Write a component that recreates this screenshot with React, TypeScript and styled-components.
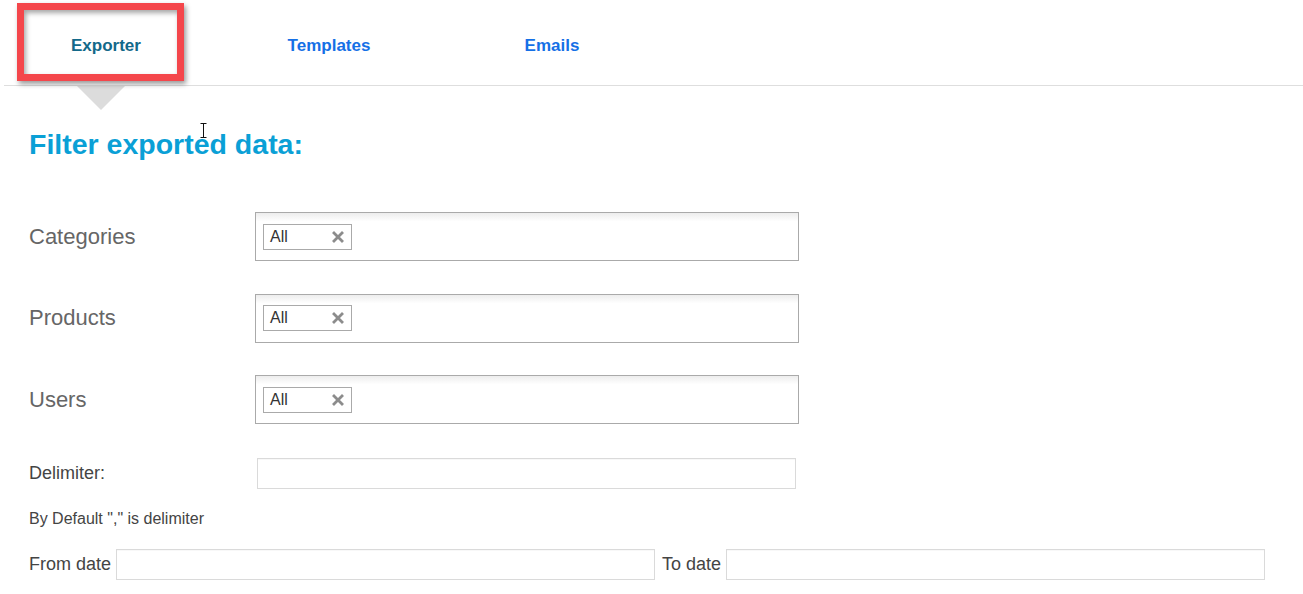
import React from "react"
import styled, { createGlobalStyle } from "styled-components"

const GlobalStyle = createGlobalStyle`
  html, body {
    margin: 0;
    background: #fff;
    font-family: "Liberation Sans", Arial, sans-serif;
  }
`

const tabs = ["Exporter", "Templates", "Emails"]
const filters = ["Categories", "Products", "Users"]

const Tag: React.FC<{ label: string }> = ({ label }) => (
  <TagBox>
    <TagText>{label}</TagText>
    <svg width="12" height="12" viewBox="0 0 12 12">
      <path d="M2 2 L10 10 M10 2 L2 10" stroke="#8c8c8c" strokeWidth="2.8" strokeLinecap="square" />
    </svg>
  </TagBox>
)

export default function App() {
  return (
    <Page>
      <GlobalStyle />
      <TabBar>
        {tabs.map((t, i) => (
          <Tab key={t} $active={i === 0}>
            {t}
          </Tab>
        ))}
        <Pointer />
        <Highlight />
      </TabBar>

      <Content>
        <Heading>
          Filter exported data:
          <Caret width="7" height="15" viewBox="0 0 7 15">
            <path d="M0.5 0.5 H6.5 M3.5 0.5 V14.5 M0.5 14.5 H6.5" stroke="#111" strokeWidth="1" fill="none" />
          </Caret>
        </Heading>

        <Filters>
          {filters.map((f) => (
            <FilterRow key={f}>
              <FilterLabel>{f}</FilterLabel>
              <Choices>
                <Tag label="All" />
              </Choices>
            </FilterRow>
          ))}
        </Filters>

        <DelimiterRow>
          <FieldLabel>Delimiter:</FieldLabel>
          <TextInput />
        </DelimiterRow>
        <Hint>By Default "," is delimiter</Hint>

        <DateRow>
          <FieldLabel>From date</FieldLabel>
          <TextInput />
          <FieldLabel $spaced>To date</FieldLabel>
          <TextInput />
        </DateRow>
      </Content>
    </Page>
  )
}

const Page = styled.div`
  width: 1303px;
  min-height: 594px;
  overflow: hidden;
`

const TabBar = styled.nav`
  position: relative;
  display: flex;
  gap: 19px;
  height: 85px;
  margin-left: 4px;
  border-bottom: 1px solid #dedede;
`

const Tab = styled.div<{ $active?: boolean }>`
  width: 204px;
  display: flex;
  align-items: center;
  justify-content: center;
  padding-top: 6px;
  font-size: 17px;
  font-weight: bold;
  color: ${(p) => (p.$active ? "#13698a" : "#1570e6")};
`

// little grey arrow hanging under the active tab
const Pointer = styled.div`
  position: absolute;
  left: 73px;
  top: 86px;
  width: 0;
  height: 0;
  border-left: 24px solid transparent;
  border-right: 24px solid transparent;
  border-top: 24px solid #dcdcdc;
`

const Highlight = styled.div`
  position: absolute;
  left: 13px;
  top: 3px;
  width: 153px;
  height: 64px;
  border: 7px solid #f4464b;
  box-shadow: 2px 3px 5px rgba(0, 0, 0, 0.4), inset 2px 3px 5px rgba(0, 0, 0, 0.35);
  pointer-events: none;
`

const Content = styled.main`
  padding: 42px 0 0 29px;
`

const Heading = styled.h1`
  position: relative;
  margin: 0;
  font-size: 28.5px;
  line-height: 32px;
  font-weight: bold;
  color: #0aa0d6;
`

const Caret = styled.svg`
  position: absolute;
  left: 171px;
  top: -5px;
`

const Filters = styled.div`
  display: flex;
  flex-direction: column;
  gap: 32.5px;
  margin-top: 52px;
`

const FilterRow = styled.div`
  display: grid;
  grid-template-columns: 226px 544px;
  align-items: center;
`

const FilterLabel = styled.label`
  font-size: 22px;
  color: #666;
`

const Choices = styled.div`
  box-sizing: border-box;
  height: 49px;
  display: flex;
  align-items: center;
  padding-left: 7px;
  border: 1px solid #aaa;
  background: linear-gradient(#eee 1%, #fff 18%);
`

const TagBox = styled.div`
  box-sizing: border-box;
  width: 89px;
  height: 26px;
  display: flex;
  align-items: center;
  justify-content: space-between;
  padding: 0 7px 0 6px;
  border: 1px solid #aaa;
  background: #fff;
`

const TagText = styled.span`
  font-size: 16px;
  color: #333;
`

const DelimiterRow = styled.div`
  display: grid;
  grid-template-columns: 228px 539px;
  align-items: center;
  margin-top: 34px;
`

const FieldLabel = styled.label<{ $spaced?: boolean }>`
  font-size: 18px;
  color: #444;
  margin-left: ${(p) => (p.$spaced ? "2px" : "0")};
  white-space: nowrap;
`

const TextInput = styled.div`
  box-sizing: border-box;
  width: 539px;
  height: 31px;
  border: 1px solid #dadada;
  box-shadow: inset 0 1px 1px rgba(0, 0, 0, 0.03);
  background: #fff;
`

const Hint = styled.p`
  margin: 21px 0 0;
  font-size: 16px;
  line-height: 18px;
  color: #444;
`

const DateRow = styled.div`
  display: flex;
  align-items: center;
  gap: 5px;
  margin-top: 21px;
`
